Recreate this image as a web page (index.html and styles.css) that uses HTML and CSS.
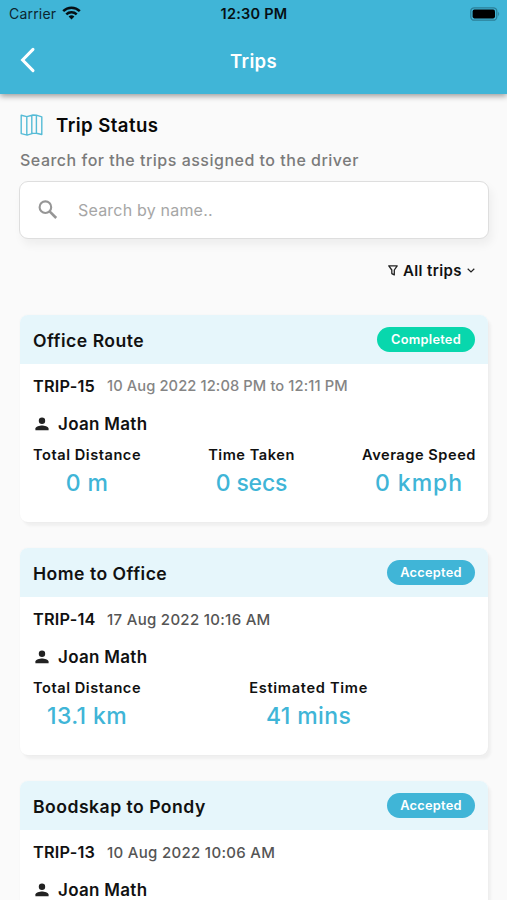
FILE: index.html
```html
<!DOCTYPE html>
<html lang="en">
<head>
<meta charset="utf-8">
<title>Trips</title>
<link rel="stylesheet" href="styles.css">
</head>
<body>
<svg class="defs" width="0" height="0" aria-hidden="true">
  <symbol id="person" viewBox="0 0 14 14"><circle cx="7" cy="3.7" r="3.2"/><path d="M.4 13.2v-1.6C.4 9.4 4.8 8.4 7 8.4s6.6 1 6.6 3.2v1.6z"/></symbol>
</svg>
<header class="app-header">
  <div class="status-bar">
    <div class="carrier"><span>Carrier</span>
      <svg width="19" height="14" viewBox="0 0 19 14" fill="none" stroke="#061014" stroke-width="2.5"><path d="M1.2 5.1a11.7 11.7 0 0 1 16.6 0M4.3 8.3a7.4 7.4 0 0 1 10.4 0"/><path d="M9.5 13.6 6.6 10.6a4.2 4.2 0 0 1 5.8 0z" fill="#061014" stroke="none"/></svg>
    </div>
    <div class="clock">12:30 PM</div>
    <svg class="battery" width="30" height="14" viewBox="0 0 30 14"><rect x=".8" y=".8" width="26" height="12.4" rx="3.5" fill="none" stroke="#2b7f98" stroke-width="1.3"/><rect x="2.6" y="2.6" width="22.4" height="8.8" rx="1.8"/><path d="M28.2 4.8q2 2.2 0 4.4z" fill="#2b7f98"/></svg>
  </div>
  <div class="nav">
    <svg width="16" height="26" viewBox="0 0 16 26" fill="none" stroke="#fff" stroke-width="3" stroke-linecap="round"><path d="M13 2.4 2.6 13 13 23.6"/></svg>
    <h1>Trips</h1>
    <span></span>
  </div>
</header>
<main>
  <div class="heading">
    <svg width="23" height="22" viewBox="0 0 23 22" fill="none" stroke="#55bbd6" stroke-width="1.4" stroke-linejoin="round"><path d="M1.2 1.3 6.8 2.6 13 1l3.4.2 5.4 1.6v17.7l-5.4-1.3-3.6.2-5.6 1.7-6-1.5zM6.8 2.6v18M11.8 1.5v18M16.4 1.3v18"/></svg>
    <h2>Trip Status</h2>
  </div>
  <p class="subtitle">Search for the trips assigned to the driver</p>
  <label class="search">
    <svg width="20" height="20" viewBox="0 0 20 20" fill="none" stroke="#969696" stroke-width="2.1"><circle cx="7.4" cy="7.2" r="5.8"/><path d="m11.6 11.4 6.6 6.6" stroke-width="2.6"/></svg>
    <span>Search by name..</span>
  </label>
  <div class="filter">
    <svg width="10" height="11" viewBox="0 0 10 11" fill="none" stroke="#222" stroke-width="1.3" stroke-linejoin="round"><path d="M.8.8h8.4L6.3 5v4.9L3.8 8.6V5z"/></svg>
    <span>All trips</span>
    <svg width="8" height="5" viewBox="0 0 8 5" fill="none" stroke="#222" stroke-width="1.2"><path d="m.7.7 3.3 3.2L7.3.7"/></svg>
  </div>
  <section class="cards">
    <article class="card">
      <div class="card-head"><h3>Office Route</h3><span class="badge done">Completed</span></div>
      <div class="card-body">
        <div class="trip"><b>TRIP-15</b><time class="past">10 Aug 2022 12:08 PM to 12:11 PM</time></div>
        <div class="driver"><svg width="14" height="14"><use href="#person"/></svg><span>Joan Math</span></div>
        <div class="stats">
          <div><span>Total Distance</span><strong>0 m</strong></div>
          <div><span>Time Taken</span><strong class="snug">0 secs</strong></div>
          <div><span>Average Speed</span><strong class="wide">0 kmph</strong></div>
        </div>
      </div>
    </article>
    <article class="card">
      <div class="card-head"><h3>Home to Office</h3><span class="badge">Accepted</span></div>
      <div class="card-body">
        <div class="trip"><b>TRIP-14</b><time>17 Aug 2022 10:16 AM</time></div>
        <div class="driver"><svg width="14" height="14"><use href="#person"/></svg><span>Joan Math</span></div>
        <div class="stats pair">
          <div><span>Total Distance</span><strong>13.1 km</strong></div>
          <div><span class="estimate">Estimated Time</span><strong>41 mins</strong></div>
        </div>
      </div>
    </article>
    <article class="card">
      <div class="card-head"><h3>Boodskap to Pondy</h3><span class="badge">Accepted</span></div>
      <div class="card-body">
        <div class="trip"><b>TRIP-13</b><time>10 Aug 2022 10:06 AM</time></div>
        <div class="driver"><svg width="14" height="14"><use href="#person"/></svg><span>Joan Math</span></div>
      </div>
    </article>
  </section>
</main>
</body>
</html>
```
FILE: styles.css
```css
* { box-sizing: border-box; }
html, body { height: 900px; overflow: hidden; }
body { margin: 0; background: #fafafa; color: #111; font-family: Inter, "Liberation Sans", sans-serif; display: flex; flex-direction: column; }
h1, h2, h3, p { margin: 0; white-space: nowrap; }
svg { display: block; flex: none; }
.defs { position: absolute; }
.app-header { flex: none; height: 94px; background: #40b5d7; box-shadow: 0 2px 6px rgba(0,0,0,.4); z-index: 1; }
.status-bar { height: 27px; padding: 0 7px 0 9px; display: grid; grid-template-columns: 1fr auto 1fr; align-items: center; font-size: 14px; color: #0c2630; }
.carrier { display: flex; align-items: center; gap: 6px; letter-spacing: .2px; }
.carrier svg { margin-top: -2px; }
.clock { font-weight: 600; color: #061014; font-size: 14.5px; letter-spacing: .25px; margin-right: 1px; }
.battery { justify-self: end; }
.nav { height: 66px; padding: 1px 20px 0; display: grid; grid-template-columns: 1fr auto 1fr; align-items: center; }
.nav h1 { color: #fff; font-size: 18.5px; font-weight: 600; line-height: 24px; letter-spacing: .35px; }
.nav svg { margin-top: -2px; }
main { flex: 1; min-height: 0; overflow: hidden; padding: 18px 19px 0 20px; }
.heading { display: flex; align-items: center; gap: 13px; height: 26px; }
.heading svg { margin-top: -1px; }
h2 { font-size: 18.6px; font-weight: 600; color: #080808; letter-spacing: .45px; }
.subtitle { margin-top: 11px; line-height: 22px; font-size: 16px; font-weight: 500; color: #7b7b7b; letter-spacing: .5px; }
.search { margin: 10px -1px 0; height: 58px; padding: 0 18px; display: flex; align-items: center; gap: 20px; background: #fff; border: 1.5px solid #dedede; border-radius: 9px; box-shadow: 3px 6px 10px rgba(0,0,0,.05); font-size: 16px; letter-spacing: .2px; color: #a6a6a6; }
.filter { margin: 20px 13px 0 0; height: 22px; display: flex; align-items: center; justify-content: flex-end; gap: 5px; font-size: 15px; font-weight: 600; letter-spacing: .4px; }
.cards { margin-top: 34px; display: flex; flex-direction: column; gap: 26px; }
.card { flex: none; height: 207px; background: #fff; border-radius: 8px; box-shadow: 3px 4px 3px rgba(0,0,0,.045), 0 0 2px rgba(0,0,0,.04); overflow: hidden; }
.card-head { height: 49px; padding: 0 13px; background: #e6f6fb; display: flex; align-items: center; justify-content: space-between; }
h3 { font-size: 17.6px; font-weight: 600; letter-spacing: .48px; padding-top: 1px; }
.badge { height: 25px; line-height: 25px; width: 88px; text-align: center; border-radius: 13px; background: #40b5d7; color: #fff; font-size: 12.8px; font-weight: 600; letter-spacing: .25px; }
.badge.done { width: 98px; background: #08d7ad; }
.card-body { padding: 10px 13px 0; }
.trip { height: 24px; display: flex; align-items: center; gap: 12px; white-space: nowrap; }
.trip b { font-size: 16.3px; font-weight: 600; width: 62px; letter-spacing: .2px; }
.trip time { font-size: 15px; font-weight: 500; color: #555; letter-spacing: .3px; }
.trip .past { font-size: 14.7px; color: #858585; letter-spacing: .1px; }
.driver { height: 24px; margin-top: 14px; padding-left: 2px; display: flex; align-items: center; gap: 9px; font-size: 17px; font-weight: 600; letter-spacing: .3px; }
.driver svg { fill: #222; }
.stats { margin-top: 9px; margin-right: -1px; display: flex; justify-content: space-between; }
.pair { padding-right: 108px; }
.stats div { display: flex; flex-direction: column; align-items: center; white-space: nowrap; }
.stats span { font-size: 14.6px; font-weight: 600; line-height: 20px; letter-spacing: .54px; }
.stats .estimate { letter-spacing: .7px; }
.stats strong { margin-top: 3px; font-size: 23px; font-weight: 500; line-height: 30px; color: #40b5d7; letter-spacing: .4px; }
.stats .snug { letter-spacing: -.2px; }
.stats .wide { letter-spacing: .95px; }
```
